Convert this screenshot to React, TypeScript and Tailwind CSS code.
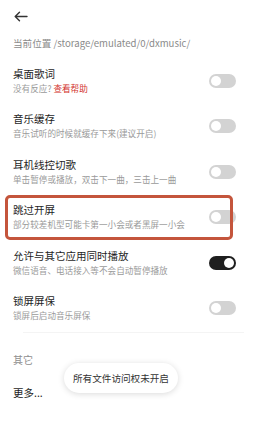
import React from 'react';

type Row = {
  title: string;
  desc: React.ReactNode;
  on?: boolean;
  marked?: boolean;
};

const rows: Row[] = [
  {
    title: '桌面歌词',
    desc: (
      <>
        没有反应? <span className="text-[#d2322d]">查看帮助</span>
      </>
    ),
  },
  { title: '音乐缓存', desc: '音乐试听的时候就缓存下来(建议开启)' },
  { title: '耳机线控切歌', desc: '单击暂停或播放，双击下一曲，三击上一曲' },
  { title: '跳过开屏', desc: '部分较差机型可能卡第一小会或者黑屏一小会', marked: true },
  { title: '允许与其它应用同时播放', desc: '微信语音、电话接入等不会自动暂停播放', on: true },
  { title: '锁屏屏保', desc: '锁屏后启动音乐屏保' },
];

const Toggle: React.FC<{ on?: boolean }> = ({ on }) => (
  <div
    className={`w-[27px] h-[14px] rounded-full flex items-center px-[2px] shrink-0 ${
      on ? 'bg-[#1f1f1f] justify-end' : 'bg-[#d3d3d3] justify-start'
    }`}
  >
    <div className="size-[10px] rounded-full bg-white"></div>
  </div>
);

const App: React.FC = () => {
  return (
    <div
      className="relative w-[267px] h-[430px] bg-white overflow-hidden"
      style={{ fontFamily: '"Noto Sans CJK SC", "Noto Sans", sans-serif' }}
    >
      {/* back */}
      <header className="h-[32px] flex items-center pl-[14px]">
        <svg width="14" height="11" viewBox="0 0 14 11" fill="none" stroke="#333" strokeWidth="1.4" strokeLinecap="round" strokeLinejoin="round">
          <path d="M13 5.5H1.5M5.5 1.2L1.2 5.5l4.3 4.3" />
        </svg>
      </header>

      <p className="mt-[4px] pl-[13px] text-[9.6px] leading-[14px] text-[#8a8a8a] whitespace-nowrap">
        当前位置 /storage/emulated/0/dxmusic/
      </p>

      <main className="mt-[15.5px] flex flex-col gap-[15.5px]">
        {rows.map((r) => (
          <div key={r.title} className="relative flex items-center justify-between pl-[13px] pr-[31px]">
            <div className="min-w-0">
              <div className="text-[10.5px] leading-[15px] text-[#1e1e1e]">{r.title}</div>
              <div className="text-[8.6px] leading-[15px] text-[#9a9a9a] whitespace-nowrap">{r.desc}</div>
            </div>
            <Toggle on={r.on} />
            {r.marked && (
              <span className="absolute left-[5px] right-[34px] top-[-7px] bottom-[-8px] border-[3px] border-[#c4553c] rounded-[5px] pointer-events-none"></span>
            )}
          </div>
        ))}
      </main>

      <div className="mt-[9px] mx-[23px] h-px bg-[#f4f4f4]"></div>

      <section className="pl-[13px]">
        <div className="mt-[20px] text-[10px] leading-[14px] text-[#8f8f8f]">其它</div>
        <div className="mt-[19px] text-[10.5px] leading-[14px] text-[#1e1e1e]">更多...</div>
      </section>

      {/* toast */}
      <div className="absolute left-[64px] top-[363px] w-[114px] h-[30px] rounded-full bg-white shadow-[0_1px_6px_rgba(0,0,0,0.15)] flex items-center justify-center text-[9.6px] text-[#333] whitespace-nowrap">
        所有文件访问权未开启
      </div>
    </div>
  );
};

export default App;
